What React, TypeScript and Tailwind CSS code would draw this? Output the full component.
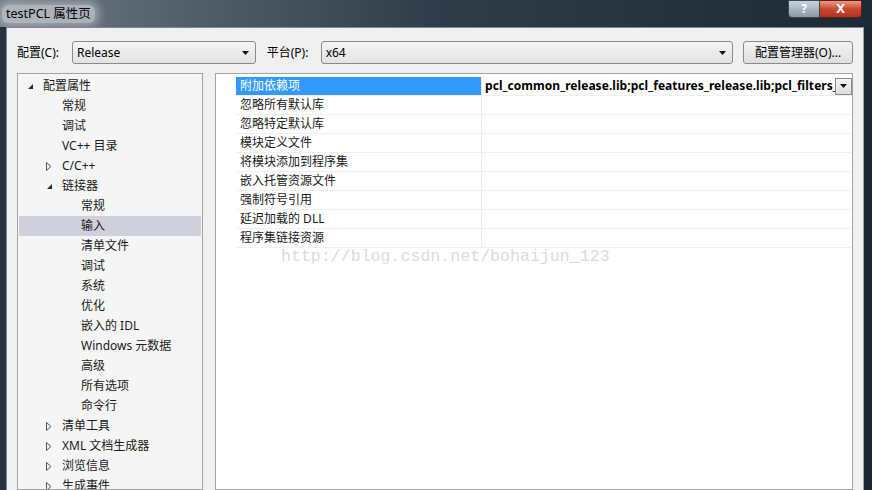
import React from "react"

const font = "font-['Noto_Sans','Noto_Sans_CJK_SC',sans-serif]"

type Node = { label: string; level: 0 | 1 | 2; arrow?: "open" | "closed"; selected?: boolean }

const tree: Node[] = [
  { label: "配置属性", level: 0, arrow: "open" },
  { label: "常规", level: 1 },
  { label: "调试", level: 1 },
  { label: "VC++ 目录", level: 1 },
  { label: "C/C++", level: 1, arrow: "closed" },
  { label: "链接器", level: 1, arrow: "open" },
  { label: "常规", level: 2 },
  { label: "输入", level: 2, selected: true },
  { label: "清单文件", level: 2 },
  { label: "调试", level: 2 },
  { label: "系统", level: 2 },
  { label: "优化", level: 2 },
  { label: "嵌入的 IDL", level: 2 },
  { label: "Windows 元数据", level: 2 },
  { label: "高级", level: 2 },
  { label: "所有选项", level: 2 },
  { label: "命令行", level: 2 },
  { label: "清单工具", level: 1, arrow: "closed" },
  { label: "XML 文档生成器", level: 1, arrow: "closed" },
  { label: "浏览信息", level: 1, arrow: "closed" },
  { label: "生成事件", level: 1, arrow: "closed" },
]

const indent = ["pl-[8px]", "pl-[27px]", "pl-[46px]"]

const props = [
  "附加依赖项",
  "忽略所有默认库",
  "忽略特定默认库",
  "模块定义文件",
  "将模块添加到程序集",
  "嵌入托管资源文件",
  "强制符号引用",
  "延迟加载的 DLL",
  "程序集链接资源",
]

function Arrow({ kind }: { kind?: "open" | "closed" }) {
  if (kind === "open")
    return (
      <svg width="7" height="7" viewBox="0 0 7 7">
        <polygon points="6,1 6,6 1,6" fill="#2b2b2b" />
      </svg>
    )
  if (kind === "closed")
    return (
      <svg width="6" height="9" viewBox="0 0 6 9">
        <polygon points="0.5,0.5 5,4.5 0.5,8.5" fill="none" stroke="#555" strokeWidth="1" />
      </svg>
    )
  return null
}

function Caret() {
  return (
    <svg width="7" height="4" viewBox="0 0 7 4">
      <polygon points="0,0 7,0 3.5,4" fill="#111" />
    </svg>
  )
}

function Combo({ value, width }: { value: string; width: string }) {
  return (
    <div
      className={`${width} h-[23px] flex items-center justify-between pl-[4px] pr-[6px] border border-[#8a8a8a] rounded-[3px] bg-gradient-to-b from-[#f4f4f4] to-[#e3e3e3] text-[12px] text-black`}
    >
      <span>{value}</span>
      <Caret />
    </div>
  )
}

export default function App() {
  return (
    <div className={`w-[872px] h-[490px] overflow-hidden flex flex-col bg-[#1e2a35] ${font}`}>
      {/* title bar */}
      <div className="h-[27px] flex items-start bg-gradient-to-r from-[#6f7a86] via-[#2f3d4a] to-[#1d2a36]">
        <div className="mt-[5px] ml-[2px] px-[4px] h-[18px] flex items-center text-[12.5px] text-black bg-[#c9ced4]/70 rounded-[6px] shadow-[0_0_8px_4px_rgba(200,206,212,0.55)]">
          testPCL 属性页
        </div>
        <div className="ml-auto mr-[10px] flex">
          <div className="w-[32px] h-[18px] flex items-center justify-center border border-[#3b4652] rounded-bl-[4px] bg-gradient-to-b from-[#c9d3dd] to-[#8b98a6] text-[12px] font-bold text-white">
            ?
          </div>
          <div className="w-[42px] h-[18px] flex items-center justify-center border border-l-0 border-[#5a1c14] rounded-br-[4px] bg-gradient-to-b from-[#e89a88] via-[#c8452f] to-[#b33320] text-[13px] font-bold text-white">
            X
          </div>
        </div>
      </div>

      <div className="flex-1 flex min-h-0">
        <div className="w-[6px] bg-[#27323c]" />
        {/* client area */}
        <div className="flex-1 min-w-0 flex flex-col bg-[#f0f0f0] border-t border-l border-[#7d8893] pl-[10px] pr-[10px] pt-[13px] text-[12px] text-black">
          <div className="flex items-center h-[23px]">
            <span className="w-[55px]">配置(C):</span>
            <Combo value="Release" width="w-[184px]" />
            <span className="ml-[11px] w-[54px]">平台(P):</span>
            <Combo value="x64" width="w-[413px]" />
            <div className="ml-[10px] w-[110px] h-[23px] flex items-center justify-center border border-[#8a8a8a] rounded-[3px] bg-gradient-to-b from-[#f4f4f4] to-[#dedede]">
              配置管理器(O)...
            </div>
          </div>

          <div className="mt-[9px] flex flex-1 min-h-0">
            {/* tree */}
            <div className="w-[186px] border border-[#a3a3a3] bg-[#f5f5f5] pt-[2px] pl-[1px] pr-[1px] overflow-hidden">
              {tree.map((n, i) => (
                <div
                  key={i}
                  className={`h-[20px] flex items-center ${indent[n.level]} ${n.selected ? "bg-[#cfd0dc]" : ""}`}
                >
                  <span className="w-[16px] flex items-center">
                    <Arrow kind={n.arrow} />
                  </span>
                  <span className="text-[#1a1a1a]">{n.label}</span>
                </div>
              ))}
            </div>

            <div className="w-[12px]" />

            {/* property grid */}
            <div className="flex-1 min-w-0 border border-[#a3a3a3] bg-white pt-[3px] pl-[20px]">
              {props.map((p, i) => (
                <div key={i} className="h-[19px] flex border-b border-[#f0f0f0]">
                  <div
                    className={`w-[246px] pl-[4px] flex items-center border-r border-[#ececec] ${
                      i === 0 ? "bg-[#3399ff] text-white" : "text-[#1a1a1a]"
                    }`}
                  >
                    {p}
                  </div>
                  <div className="flex-1 min-w-0 flex items-center pl-[3px]">
                    {i === 0 && (
                      <>
                        <span className="flex-1 min-w-0 overflow-hidden whitespace-nowrap font-bold tracking-[0.05px] text-black">
                          pcl_common_release.lib;pcl_features_release.lib;pcl_filters_
                        </span>
                        <div className="w-[17px] h-[17px] flex items-center justify-center border border-[#8a8a8a] bg-gradient-to-b from-[#f6f6f6] to-[#dcdcdc]">
                          <Caret />
                        </div>
                      </>
                    )}
                  </div>
                </div>
              ))}
              <div className="ml-[45px] h-[19px] flex items-center font-['Liberation_Mono',monospace] text-[16.6px] text-[#dcdcdc]">
                http://blog.csdn.net/bohaijun_123
              </div>
            </div>
          </div>
        </div>
        <div className="w-[9px] bg-[#1d2731] border-l border-[#9aa4ad]" />
      </div>
    </div>
  )
}
